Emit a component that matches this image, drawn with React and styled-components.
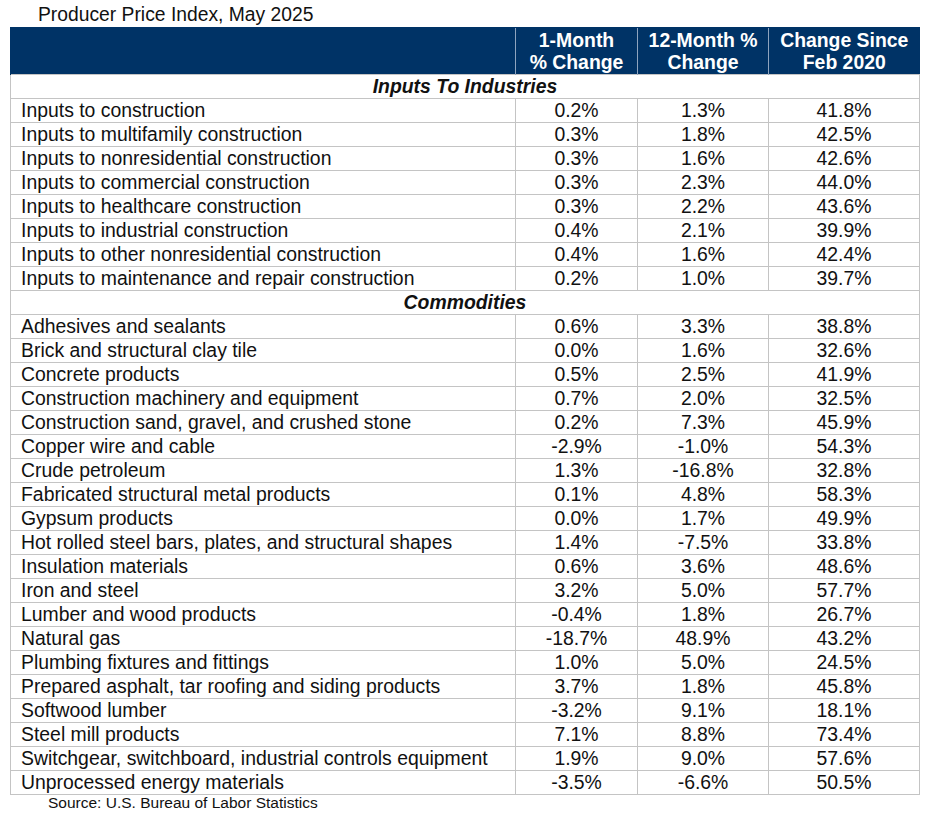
import React from "react";
import styled, { createGlobalStyle } from "styled-components";

const Global = createGlobalStyle`
  html, body { margin: 0; padding: 0; background: #ffffff; }
  body { font-family: "Liberation Sans", Arial, sans-serif; color: #111; }
`;

const Page = styled.div`
  width: 936px;
  height: 827px;
  padding: 0 0 0 10px;
  box-sizing: border-box;
  display: flex;
  flex-direction: column;
`;

const Title = styled.div`
  font-size: 19.3px;
  line-height: 27px;
  height: 27px;
  padding-left: 28px;
  margin-top: 1px;
  margin-bottom: -1px;
  color: #111;
  white-space: nowrap;
`;

const Table = styled.table`
  border-collapse: collapse;
  width: 909px;
  table-layout: fixed;
  font-size: 19.4px;
`;

const HeadCell = styled.th`
  background: #003366;
  color: #ffffff;
  font-weight: bold;
  font-size: 19.4px;
  line-height: 22px;
  height: 46px;
  padding: 0;
  text-align: center;
  white-space: nowrap;
  border-left: 1px solid #8ea4bf;
  border-top: 1px solid #003366;
  &:first-child { border-left: 1px solid #003366; }
`;

const SectionCell = styled.td`
  font-weight: bold;
  font-style: italic;
  text-align: center;
  height: 23px;
  line-height: 23px;
  padding: 0;
  border: 1px solid #c4c4c4;
`;

const Cell = styled.td`
  height: 23px;
  line-height: 23px;
  padding: 0 0 0 ${(p) => (p.$label ? "10px" : "0")};
  text-align: ${(p) => (p.$label ? "left" : "center")};
  border: 1px solid #c4c4c4;
  white-space: nowrap;
  overflow: hidden;
`;

const Source = styled.div`
  font-size: 15.5px;
  line-height: 16px;
  padding-left: 38px;
  color: #111;
  white-space: nowrap;
`;

const inputs = [
  ["Inputs to construction", "0.2%", "1.3%", "41.8%"],
  ["Inputs to multifamily construction", "0.3%", "1.8%", "42.5%"],
  ["Inputs to nonresidential construction", "0.3%", "1.6%", "42.6%"],
  ["Inputs to commercial construction", "0.3%", "2.3%", "44.0%"],
  ["Inputs to healthcare construction", "0.3%", "2.2%", "43.6%"],
  ["Inputs to industrial construction", "0.4%", "2.1%", "39.9%"],
  ["Inputs to other nonresidential construction", "0.4%", "1.6%", "42.4%"],
  ["Inputs to maintenance and repair construction", "0.2%", "1.0%", "39.7%"],
];

const commodities = [
  ["Adhesives and sealants", "0.6%", "3.3%", "38.8%"],
  ["Brick and structural clay tile", "0.0%", "1.6%", "32.6%"],
  ["Concrete products", "0.5%", "2.5%", "41.9%"],
  ["Construction machinery and equipment", "0.7%", "2.0%", "32.5%"],
  ["Construction sand, gravel, and crushed stone", "0.2%", "7.3%", "45.9%"],
  ["Copper wire and cable", "-2.9%", "-1.0%", "54.3%"],
  ["Crude petroleum", "1.3%", "-16.8%", "32.8%"],
  ["Fabricated structural metal products", "0.1%", "4.8%", "58.3%"],
  ["Gypsum products", "0.0%", "1.7%", "49.9%"],
  ["Hot rolled steel bars, plates, and structural shapes", "1.4%", "-7.5%", "33.8%"],
  ["Insulation materials", "0.6%", "3.6%", "48.6%"],
  ["Iron and steel", "3.2%", "5.0%", "57.7%"],
  ["Lumber and wood products", "-0.4%", "1.8%", "26.7%"],
  ["Natural gas", "-18.7%", "48.9%", "43.2%"],
  ["Plumbing fixtures and fittings", "1.0%", "5.0%", "24.5%"],
  ["Prepared asphalt, tar roofing and siding products", "3.7%", "1.8%", "45.8%"],
  ["Softwood lumber", "-3.2%", "9.1%", "18.1%"],
  ["Steel mill products", "7.1%", "8.8%", "73.4%"],
  ["Switchgear, switchboard, industrial controls equipment", "1.9%", "9.0%", "57.6%"],
  ["Unprocessed energy materials", "-3.5%", "-6.6%", "50.5%"],
];

const Rows = ({ data }) =>
  data.map((r) => (
    <tr key={r[0]}>
      <Cell $label>{r[0]}</Cell>
      <Cell>{r[1]}</Cell>
      <Cell>{r[2]}</Cell>
      <Cell>{r[3]}</Cell>
    </tr>
  ));

export default function App() {
  return (
    <Page>
      <Global />
      <Title>Producer Price Index, May 2025</Title>
      <Table>
        <colgroup>
          <col style={{ width: 505 }} />
          <col style={{ width: 122 }} />
          <col style={{ width: 131 }} />
          <col style={{ width: 151 }} />
        </colgroup>
        <thead>
          <tr>
            <HeadCell></HeadCell>
            <HeadCell>1-Month<br />% Change</HeadCell>
            <HeadCell>12-Month %<br />Change</HeadCell>
            <HeadCell>Change Since<br />Feb 2020</HeadCell>
          </tr>
        </thead>
        <tbody>
          <tr><SectionCell colSpan={4}>Inputs To Industries</SectionCell></tr>
          <Rows data={inputs} />
          <tr><SectionCell colSpan={4}>Commodities</SectionCell></tr>
          <Rows data={commodities} />
        </tbody>
      </Table>
      <Source>Source: U.S. Bureau of Labor Statistics</Source>
    </Page>
  );
}
